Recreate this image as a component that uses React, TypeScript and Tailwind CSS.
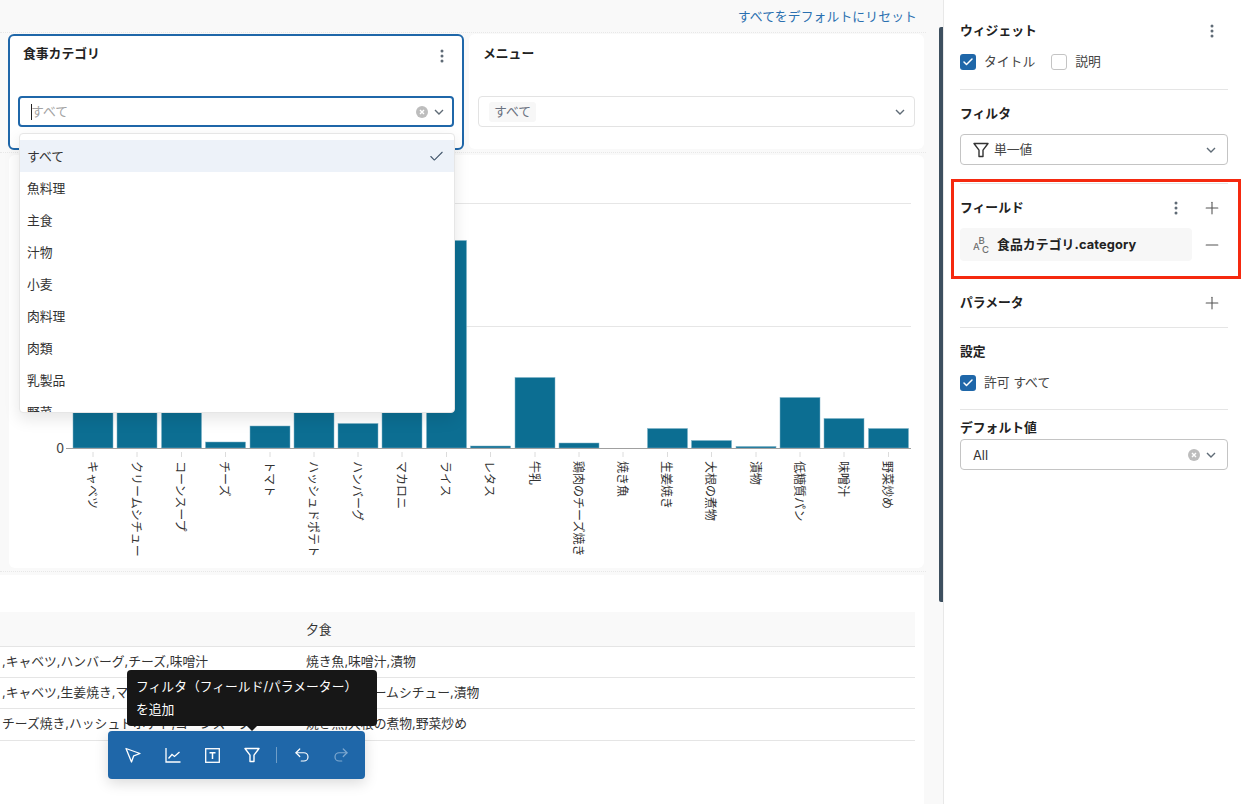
// App.tsx
// Dashboard editor: filter widgets, bar chart and table on the left, widget settings on the right.
import { Check, Minus, Plus, Redo2, Undo2 } from "lucide-react";

const options = ["すべて", "魚料理", "主食", "汁物", "小麦", "肉料理", "肉類", "乳製品", "野菜"];

// x = left edge, top = top of the bar, baseline is y=448 (page coordinates)
const bars = [
  { label: "キャベツ", x: 73, top: 400 },
  { label: "クリームシチュー", x: 117, top: 400 },
  { label: "コーンスープ", x: 161.5, top: 400 },
  { label: "チーズ", x: 205.5, top: 442 },
  { label: "トマト", x: 250, top: 426 },
  { label: "ハッシュドポテト", x: 294, top: 400 },
  { label: "ハンバーグ", x: 338, top: 423.5 },
  { label: "マカロニ", x: 382, top: 400 },
  { label: "ライス", x: 426.5, top: 240.5 },
  { label: "レタス", x: 470.5, top: 446 },
  { label: "牛乳", x: 515, top: 377.5 },
  { label: "鶏肉のチーズ焼き", x: 559, top: 443 },
  { label: "焼き魚", x: 603, top: 448 },
  { label: "生姜焼き", x: 647.5, top: 428.5 },
  { label: "大根の煮物", x: 691.5, top: 440.5 },
  { label: "漬物", x: 736, top: 446.5 },
  { label: "低糖質パン", x: 780, top: 397.5 },
  { label: "味噌汁", x: 824, top: 418.5 },
  { label: "野菜炒め", x: 868.5, top: 428.5 },
];

const rows = [
  { lunch: ",キャベツ,ハンバーグ,チーズ,味噌汁", dinner: "焼き魚,味噌汁,漬物" },
  { lunch: ",キャベツ,生姜焼き,マカロニ,レタス,牛乳", dinner: "焼き魚,クリームシチュー,漬物" },
  { lunch: "チーズ焼き,ハッシュドポテト,コーンスープ", dinner: "焼き魚,大根の煮物,野菜炒め" },
];

function Kebab({ color = "#5f6b76" }: { color?: string }) {
  return (
    <svg width="4" height="14" viewBox="0 0 4 14" fill={color} aria-hidden="true">
      <circle cx="2" cy="2" r="1.5" />
      <circle cx="2" cy="7" r="1.5" />
      <circle cx="2" cy="12" r="1.5" />
    </svg>
  );
}

function Chevron({ color = "#5f6b76" }: { color?: string }) {
  return (
    <svg width="10" height="6" viewBox="0 0 10 6" fill="none" stroke={color} strokeWidth="1.4" aria-hidden="true">
      <path d="M1 1L5 5L9 1" />
    </svg>
  );
}

function ClearIcon() {
  return (
    <svg width="12" height="12" viewBox="0 0 12 12" aria-hidden="true">
      <circle cx="6" cy="6" r="6" fill="#bdbdbd" />
      <path d="M4 4L8 8M8 4L4 8" stroke="#fff" strokeWidth="1.4" />
    </svg>
  );
}

function FunnelIcon({ color, size = 16 }: { color: string; size?: number }) {
  return (
    <svg width={size} height={size} viewBox="0 0 16 16" fill="none" stroke={color} strokeWidth="1.4" strokeLinejoin="round" aria-hidden="true">
      <path d="M1 1.5H15L10 8.2V14.5H6V8.2Z" />
    </svg>
  );
}

function CheckBox({ checked }: { checked: boolean }) {
  if (!checked) {
    return <span className="h-4 w-4 rounded-[3px] border border-[#c4c4c4] bg-white" />;
  }
  return (
    <span className="flex h-4 w-4 items-center justify-center rounded-[3px] bg-[#1f67a9]">
      <Check size={12} strokeWidth={3} color="#fff" />
    </span>
  );
}

function BarChart() {
  return (
    <svg width="915" height="413" viewBox="9 155 915 413" className="block">
      <line x1="66" x2="911" y1="203.5" y2="203.5" stroke="#e6e6e6" />
      <line x1="66" x2="911" y1="326.5" y2="326.5" stroke="#e6e6e6" />
      {bars.map((bar) => (
        <g key={bar.label}>
          {bar.top < 448 && (
            <rect
              x={bar.x}
              y={bar.top}
              width="40"
              height={448 - bar.top}
              fill="#0c6e92"
              stroke="#7fb3c8"
              strokeWidth="0.5"
            />
          )}
          <line x1={bar.x + 20} x2={bar.x + 20} y1="452" y2="457" stroke="#dcdcdc" />
          <text
            transform={`translate(${bar.x + 20} 461) rotate(90)`}
            dominantBaseline="central"
            fontSize="12"
            fill="#333"
          >
            {bar.label}
          </text>
        </g>
      ))}
      <line x1="66" x2="911" y1="448.5" y2="448.5" stroke="#a0a0a0" />
      <text x="64" y="453" textAnchor="end" fontSize="14" fill="#444">
        0
      </text>
    </svg>
  );
}

function ChartIcon() {
  return (
    <svg width="16" height="16" viewBox="0 0 16 16" fill="none" stroke="#fff" strokeWidth="1.3" aria-hidden="true">
      <path d="M1 1V15H15.5" />
      <path d="M3.5 11.5L7 7.5L9.5 9.5L14.5 5" />
    </svg>
  );
}

function TextBoxIcon() {
  return (
    <svg width="15" height="15" viewBox="0 0 15 15" fill="none" stroke="#fff" aria-hidden="true">
      <rect x="0.7" y="0.7" width="13.6" height="13.6" strokeWidth="1.3" />
      <path d="M4.5 4.7H10.5M7.5 4.7V11" strokeWidth="1.5" />
    </svg>
  );
}

function PointerIcon() {
  return (
    <svg width="16" height="16" viewBox="0 0 16 16" fill="none" stroke="#fff" strokeWidth="1.3" strokeLinejoin="round" aria-hidden="true">
      <path d="M1 1.5L15 6.5L8.7 8.8L6.5 15Z" />
    </svg>
  );
}

function AbcIcon() {
  return (
    <svg width="16" height="18" viewBox="0 0 16 18" fill="#6f6f6f" fontSize="9.5" fontWeight="500" aria-hidden="true">
      <text x="0" y="13.5">A</text>
      <text x="5.5" y="8">B</text>
      <text x="9" y="17">C</text>
    </svg>
  );
}

function SectionTitle({ children }: { children: string }) {
  return <h3 className="text-[12.8px] leading-6 font-bold text-[#222]">{children}</h3>;
}

function SettingsPanel() {
  return (
    <aside className="relative h-full w-[303px] shrink-0 border-l border-[#e8e8e8] bg-white pr-[18px] pl-4 text-[12.8px] text-[#444]">
      <section className="h-[90px] border-b border-[#e5e5e5] pt-[19px]">
        <div className="flex items-center justify-between pr-[14px]">
          <SectionTitle>ウィジェット</SectionTitle>
          <Kebab />
        </div>
        <div className="mt-[9px] flex items-center">
          <CheckBox checked />
          <span className="ml-2">タイトル</span>
          <span className="ml-4 flex items-center">
            <CheckBox checked={false} />
            <span className="ml-2">説明</span>
          </span>
        </div>
      </section>

      <section className="h-[94px] border-b border-[#e5e5e5] pt-[12px]">
        <SectionTitle>フィルタ</SectionTitle>
        <div className="mt-[8px] flex h-[31px] items-center rounded-[4px] border border-[#c4c4c4] pr-[11px] pl-3">
          <FunnelIcon color="#333" />
          <span className="ml-[5px] flex-1 pt-[1px] text-[#444]">単一値</span>
          <Chevron />
        </div>
      </section>

      <section className="h-[95px] pt-[12px]">
        <div className="flex items-center justify-between">
          <SectionTitle>フィールド</SectionTitle>
          <div className="flex items-center">
            <Kebab />
            <Plus size={20} strokeWidth={1.3} color="#555" className="mr-[6px] ml-[24px]" />
          </div>
        </div>
        <div className="mt-[8px] flex items-center">
          <div className="flex h-[33px] w-[232px] items-center rounded-[4px] bg-[#f7f7f7] pl-[13px]">
            <AbcIcon />
            <span className="ml-2 text-[12.8px] font-bold tracking-[0.01em] text-[#222]">食品カテゴリ.category</span>
          </div>
          <Minus size={20} strokeWidth={1.3} color="#555" className="ml-[10px]" />
        </div>
      </section>

      <section className="flex h-[49px] items-start justify-between border-b border-[#e5e5e5] pt-[12px]">
        <SectionTitle>パラメータ</SectionTitle>
        <Plus size={20} strokeWidth={1.3} color="#555" className="mt-[2px] mr-[6px]" />
      </section>

      <section className="h-[82px] border-b border-[#e5e5e5] pt-[12px]">
        <SectionTitle>設定</SectionTitle>
        <div className="mt-[9px] flex items-center">
          <CheckBox checked />
          <span className="ml-2 pb-[1px]">許可 すべて</span>
        </div>
      </section>

      <section className="pt-[6px]">
        <SectionTitle>デフォルト値</SectionTitle>
        <div className="-mt-[1px] flex h-[31px] items-center rounded-[4px] border border-[#c4c4c4] pr-[11px] pl-3">
          <span className="flex-1 pt-[2px] text-[#333]">All</span>
          <ClearIcon />
          <span className="ml-[6px] flex">
            <Chevron />
          </span>
        </div>
      </section>

      {/* red annotation frame over the field section */}
      <div className="absolute top-[179px] left-[7px] h-[100px] w-[290px] border-[3px] border-[#f5290f]" />
    </aside>
  );
}

export default function App() {
  return (
    <div className="flex h-[804px] w-[1246px] overflow-hidden bg-[#f9f9f9] font-['Inter','Noto_Sans_CJK_JP',sans-serif]">
      <main className="relative h-full w-[943px] shrink-0">
        <div className="flex h-[32px] justify-end pt-[8px] pr-[26px]">
          <a className="text-[12.8px] leading-[18px] tracking-[0.01em] text-[#2a70b0]">すべてをデフォルトにリセット</a>
        </div>

        {/* filter widgets */}
        <div className="h-[120px] w-[926px] border-t border-dotted border-[#e8e8e8] pt-[1px] pl-[8px]">
          <div className="flex gap-[5px]">
            <div className="h-[116px] w-[456px] rounded-[6px] border-2 border-[#1f67a9] bg-white pt-[8px] pr-[8px] pl-[8px]">
              <div className="flex items-start justify-between pr-[10px] pl-[5px]">
                <h3 className="text-[12.8px] leading-[20px] font-bold text-[#222]">食事カテゴリ</h3>
                <span className="mt-[5px]">
                  <Kebab />
                </span>
              </div>
              <div className="mt-[32px] flex h-[31px] items-center rounded-[4px] border-2 border-[#1f67a9] pr-[8px] pl-[11px]">
                <span className="h-[16px] w-px bg-[#222]" />
                <span className="-ml-[1px] flex-1 text-[12.8px] text-[#a3a3a3]">すべて</span>
                <ClearIcon />
                <span className="ml-[6px] flex">
                  <Chevron />
                </span>
              </div>
            </div>
            <div className="h-[115px] w-[455px] rounded-[6px] bg-white pt-[10px] pl-[9px]">
              <h3 className="pl-[5px] text-[12.8px] leading-[20px] font-bold text-[#222]">メニュー</h3>
              <div className="mt-[32px] flex h-[31px] w-[437px] items-center justify-between rounded-[4px] border border-[#e3e3e3] pr-[9px] pl-[10px]">
                <span className="rounded-[3px] bg-[#f7f7f7] px-[5px] text-[12.8px] leading-[20px] text-[#6b7280]">すべて</span>
                <Chevron />
              </div>
            </div>
          </div>
        </div>

        {/* chart */}
        <div className="h-[419px] w-[926px] border-t border-dotted border-[#e8e8e8] pt-[2px] pl-[9px]">
          <div className="h-[413px] w-[915px] rounded-[6px] bg-white font-['Noto_Sans_CJK_JP',sans-serif]">
            <BarChart />
          </div>
        </div>

        {/* table, scrolled to the right so the first column is cut off */}
        <div className="h-[233px] w-[926px] border-t border-dotted border-[#e8e8e8] pt-[3px]">
          <div className="h-[230px] w-[924px] bg-white pt-[37px] pr-[9px] text-[12.8px] text-[#333]">
            <div className="flex h-[35px] items-center border-b border-[#e5e5e5] bg-[#f9f9f9] pt-[2px] pl-[306px]">夕食</div>
            {rows.map((row, i) => (
              <div
                key={row.dinner}
                className={
                  i === 2
                    ? "flex h-[32px] items-center border-b border-[#e5e5e5] pb-[2px] pl-[2px]"
                    : "flex h-[31px] items-center border-b border-[#e5e5e5] pl-[2px]"
                }
              >
                <span className="w-[304px] shrink-0 overflow-hidden whitespace-nowrap">{row.lunch}</span>
                <span>{row.dinner}</span>
              </div>
            ))}
          </div>
        </div>

        {/* open dropdown of the first filter */}
        <div className="absolute top-[133px] left-[19px] h-[280px] w-[436px] overflow-hidden rounded-[4px] border border-[#e6e6e6] bg-white pt-[6px] text-[12.8px] text-[#333] shadow-[0_6px_16px_rgba(0,0,0,0.1)]">
          {options.map((option, i) => (
            <div
              key={option}
              className={
                i === 0
                  ? "flex h-[32px] items-center justify-between bg-[#edf2f9] pt-[0.5px] pr-[9px] pl-[7px]"
                  : "flex h-[32px] items-center pt-[0.5px] pl-[7px]"
              }
            >
              {option}
              {i === 0 && <Check size={17} strokeWidth={1.5} color="#42566b" />}
            </div>
          ))}
        </div>

        {/* scrollbar */}
        <div className="absolute top-[27px] left-[939px] h-[575px] w-[4px] rounded-l-[2px] bg-[#3d4f5f]" />

        {/* tooltip and toolbar */}
        <div className="absolute top-[670px] left-[127px] h-[56px] w-[250px] rounded-[4px] bg-[#171717] px-[9px] pt-[5px] text-[12.8px] leading-[24px] text-white">
          <p>フィルタ（フィールド/パラメーター）</p>
          <p className="-mt-[1px]">を追加</p>
          <span className="absolute top-[56px] left-[120px] h-0 w-0 border-x-[5px] border-t-[5px] border-x-transparent border-t-[#171717]" />
        </div>
        <div className="absolute top-[731px] left-[108px] flex h-[48px] w-[257px] items-center rounded-[4px] bg-[#1f67a9] pl-[17px] shadow-[0_4px_14px_rgba(0,0,0,0.15)]">
          <span className="flex w-[16px] justify-center"><PointerIcon /></span>
          <span className="ml-[24px] flex w-[16px] justify-center"><ChartIcon /></span>
          <span className="ml-[23px] flex w-[16px] justify-center"><TextBoxIcon /></span>
          <span className="ml-[24px] flex w-[16px] justify-center"><FunnelIcon color="#fff" /></span>
          <span className="ml-[16px] h-[16px] w-px bg-[#6f9ec8]" />
          <span className="ml-[16px] flex"><Undo2 size={18} strokeWidth={1.6} color="#fff" /></span>
          <span className="ml-[21px] flex"><Redo2 size={18} strokeWidth={1.6} color="#7fa9d0" /></span>
        </div>
      </main>

      <SettingsPanel />
    </div>
  );
}
